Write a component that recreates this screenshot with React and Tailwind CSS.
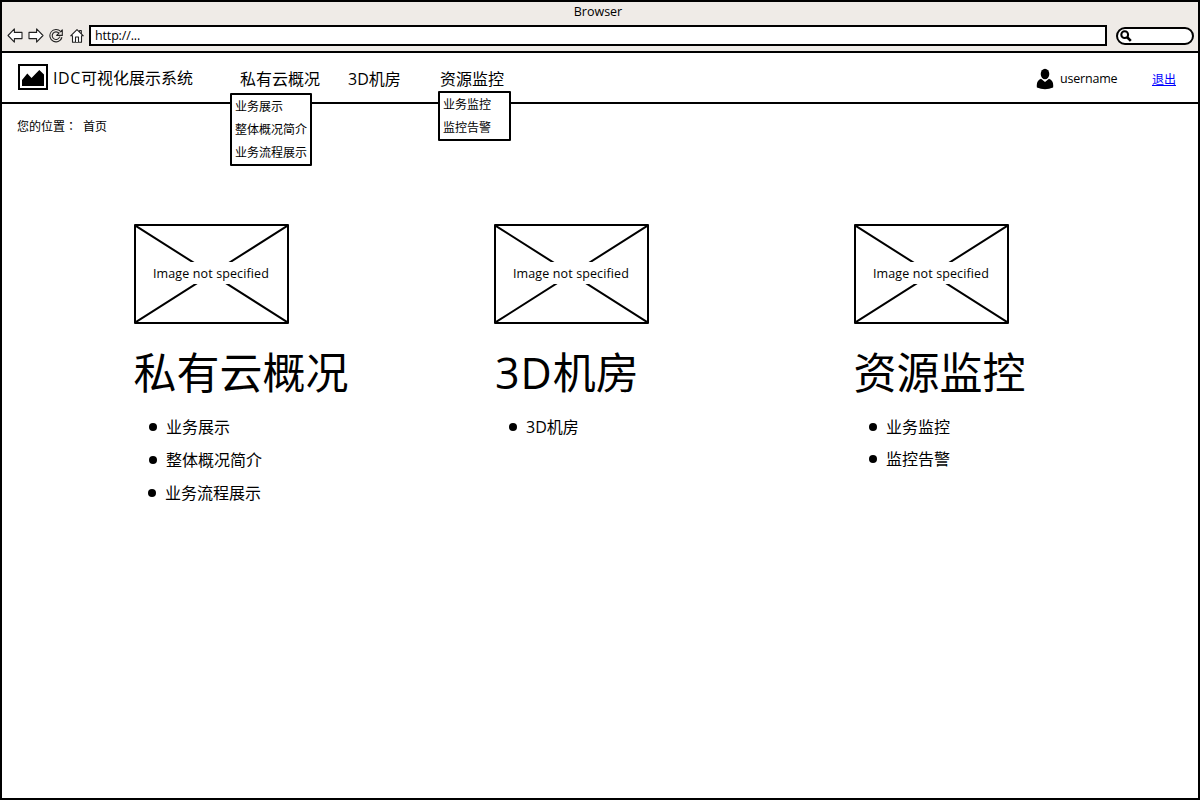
const FONT = "font-['Open_Sans','Noto_Sans_CJK_SC',sans-serif]";

function Label({ className = "", children }) {
  return <span className={`block whitespace-nowrap ${className}`}>{children}</span>;
}

function BackArrow({ className }) {
  return (
    <svg className={className} width="16" height="16" viewBox="0 0 16 16" fill="#fff" stroke="#222" strokeWidth="1.1" strokeLinejoin="round">
      <path d="M1 7.5 L7.4 0.9 V4.4 H15 V10.6 H7.4 V14.1 Z" />
    </svg>
  );
}

function ReloadIcon() {
  return (
    <svg width="14" height="14" viewBox="0 0 14 14" fill="none">
      <path d="M10.8 3.4 A5 5 0 1 0 11.9 8" stroke="#222" strokeWidth="3.4" />
      <path d="M7.6 6.4 H13.3 V0.8 Z" fill="#efebe7" stroke="#222" strokeWidth="1.1" strokeLinejoin="round" />
      <path d="M10.9 3.4 A5 5 0 1 0 11.7 8.3" stroke="#efebe7" strokeWidth="1.3" />
    </svg>
  );
}

function HomeIcon() {
  return (
    <svg width="14" height="14" viewBox="0 0 14 14" fill="#fff" stroke="#222" strokeWidth="1.1" strokeLinejoin="round">
      <path d="M9.6 3 V1.5 H11.3 V5" />
      <path d="M0.7 6.8 L7 0.7 L13.3 6.8 H11.5 V13.2 H2.5 V6.8 Z" />
      <path d="M5.5 13 V8 H8.5 V13" />
    </svg>
  );
}

function ImagePlaceholder() {
  return (
    <div className="relative h-[100px] w-[155px] rounded-[1px] border-2 border-black">
      <svg className="absolute inset-0" width="151" height="96" viewBox="0 0 151 96" stroke="#000" strokeWidth="2">
        <path d="M0 0 L151 96 M151 0 L0 96" />
      </svg>
      <div className="relative mx-auto mt-[36px] flex h-[22px] w-[124px] items-center justify-center bg-white pr-px">
        <Label className="pt-[2px] text-[12.5px] leading-[22px] tracking-[0.12px]">Image not specified</Label>
      </div>
    </div>
  );
}

function Section({ title, prefix, items, rowHeight = "h-[33px]" }) {
  return (
    <section className="w-[360px] shrink-0">
      <ImagePlaceholder />
      <h2 className="-ml-[0.5px] mt-[17px] h-[64px] whitespace-nowrap text-[43px] leading-[64px]">
        {prefix && <span className="ml-[1.5px] tracking-[1px]">{prefix}</span>}
        {title}
      </h2>
      <ul className="mt-[5px]">
        {items.map((item) => (
          <li key={item} className={`flex items-center pl-[15px] last:nth-3:pl-[14px] ${rowHeight}`}>
            <span className="size-2 rounded-full bg-black" />
            <Label className="ml-[9px] text-[16px] leading-[32px]">{item}</Label>
          </li>
        ))}
      </ul>
    </section>
  );
}

function Menu({ className, items }) {
  return (
    <div className={`absolute z-10 rounded-[1px] border-2 border-black bg-white pl-[3px] ${className}`}>
      {items.map((item) => (
        <Label key={item} className="text-[12px] leading-[23px]">{item}</Label>
      ))}
    </div>
  );
}

export default function App() {
  return (
    <div className={`${FONT} flex h-[800px] w-[1200px] flex-col overflow-hidden border-2 border-black bg-white text-black`}>
      <header className="flex h-[51px] shrink-0 flex-col border-b-2 border-black bg-[#efebe7]">
        <div className="flex h-[20px] justify-center pr-[4px]">
          <Label className="text-[12.5px] leading-[20px]">Browser</Label>
        </div>
        <div className="flex h-[27px] items-center pl-[5px] pr-[4px]">
          <BackArrow />
          <BackArrow className="ml-[5px] -scale-x-100" />
          <span className="ml-[5px]"><ReloadIcon /></span>
          <span className="ml-[7px]"><HomeIcon /></span>
          <div className="ml-[5px] flex h-[21px] grow items-center border-2 border-black bg-white pl-[4px]">
            <Label className="text-[12.5px] leading-[17px] tracking-[-0.15px]">http://...</Label>
          </div>
          <div className="ml-[9px] mt-[1px] flex h-[18px] w-[78px] items-center rounded-full border-2 border-black bg-white pl-[2px]">
            <svg width="12" height="12" viewBox="0 0 12 12" fill="none" stroke="#000">
              <circle cx="4.7" cy="4.7" r="3.4" strokeWidth="2" />
              <path d="M7 7 L10.8 10.8" strokeWidth="2.6" />
            </svg>
          </div>
        </div>
      </header>

      <nav className="relative flex h-[51px] shrink-0 items-center border-b-2 border-black">
        <svg className="mb-[2px] ml-[16px]" width="30" height="26" viewBox="0 0 30 26">
          <rect x="1" y="1" width="28" height="24" fill="#fff" stroke="#000" strokeWidth="2" />
          <path d="M4 22 V16 L9.3 9.5 L13.5 14 L21.3 6 L26 10.5 V22 Z" />
        </svg>
        <Label className="ml-[5px] w-[187px] text-[16px]"><span className="tracking-[0.6px]">IDC</span>可视化展示系统</Label>
        <Label className="w-[108px] pt-[2px] text-[16px]">私有云概况</Label>
        <Label className="w-[92px] pt-[2px] text-[16px]">3D机房</Label>
        <Label className="pt-[2px] text-[16px]">资源监控</Label>
        <div className="ml-auto flex items-center pr-[22px] pt-[3px]">
          <svg width="18" height="22" viewBox="0 0 18 22">
            <ellipse cx="9" cy="6" rx="4.3" ry="5.2" />
            <path d="M0.9 19.5 Q0 12.5 5 10.8 L9 14 L13 10.8 Q18 12.5 17.1 19.5 Q9 22.8 0.9 19.5 Z" />
          </svg>
          <Label className="ml-[6px] w-[92px] pt-[1px] text-[12.5px] tracking-[-0.2px]">username</Label>
          <a className="block pt-[1px] text-[12px] text-[#0000ff] underline">退出</a>
        </div>
        <Menu className="left-[228px] top-[40px] h-[73px] w-[82px]" items={["业务展示", "整体概况简介", "业务流程展示"]} />
        <Menu className="left-[436px] top-[38px] h-[50px] w-[73px]" items={["业务监控", "监控告警"]} />
      </nav>

      <main>
        <div className="flex h-[35px] gap-[6px] pl-[15px] pt-[11px]">
          <Label className="text-[12px] leading-[24px]">您的位置<span className="font-['Noto_Sans_CJK_TC',sans-serif] leading-none" lang="zh-TW">：</span></Label>
          <Label className="text-[12px] leading-[24px]">首页</Label>
        </div>
        <div className="flex pl-[132px] pt-[85px]">
          <Section title="私有云概况" items={["业务展示", "整体概况简介", "业务流程展示"]} />
          <Section prefix="3D" title="机房" items={["3D机房"]} />
          <Section title="资源监控" items={["业务监控", "监控告警"]} rowHeight="h-[33px] last:h-[31px]" />
        </div>
      </main>
    </div>
  );
}
